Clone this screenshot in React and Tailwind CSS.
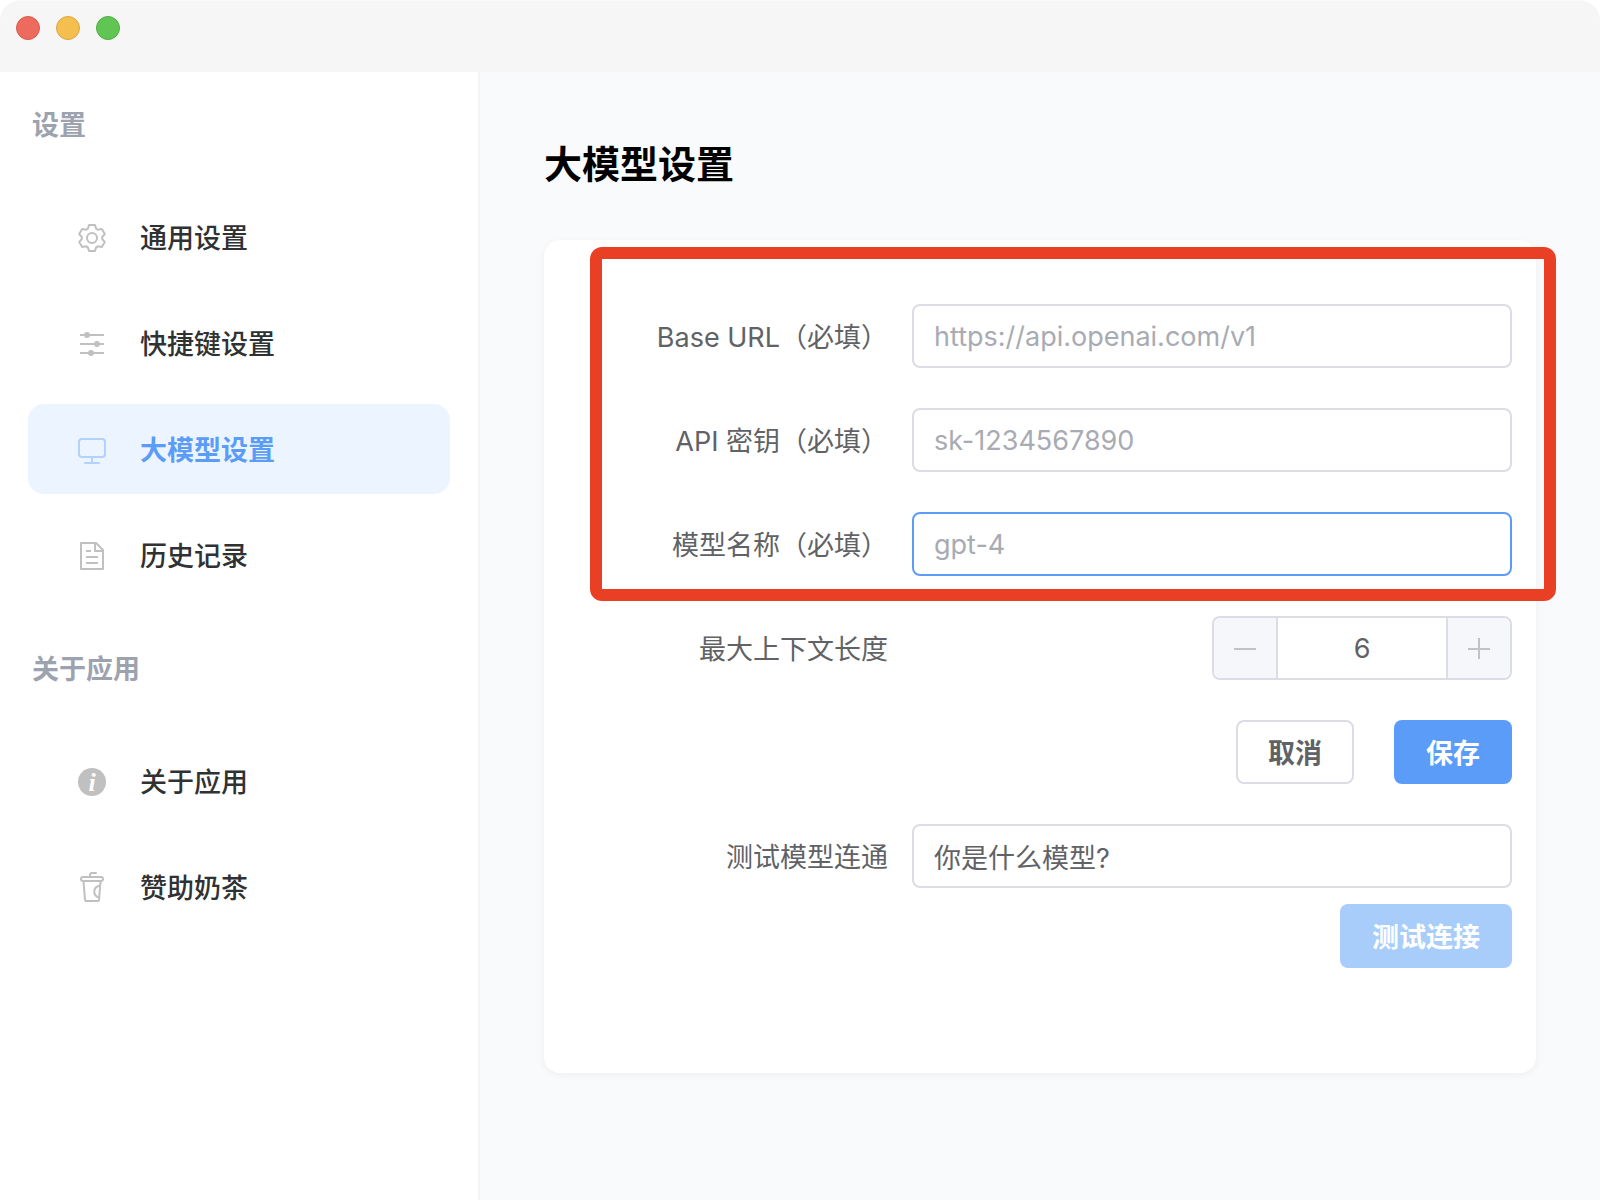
import { useState } from "react";
import clsx from "clsx";

function GearIcon(props) {
  return (
    <svg viewBox="0 0 32 32" fill="none" stroke="currentColor" strokeWidth="2" strokeLinejoin="round" {...props}>
      <path
        transform="translate(16 17)"
        d="M-3-13H3L4-9.6Q5.1-8.6 6.3-8.3L9.8-9.1L12.8-3.9L10.3-1.3Q10 0 10.3 1.3L12.8 3.9L9.8 9.1L6.3 8.3Q5.1 8.6 4 9.6L3 13H-3L-4 9.6Q-5.1 8.6-6.3 8.3L-9.8 9.1L-12.8 3.9L-10.3 1.3Q-10 0-10.3-1.3L-12.8-3.9L-9.8-9.1L-6.3-8.3Q-5.1-8.6-4-9.6Z"
      />
      <circle cx="16" cy="17" r="5" />
    </svg>
  );
}

function SlidersIcon(props) {
  return (
    <svg viewBox="0 0 32 32" fill="currentColor" {...props}>
      <path d="M4 7h24v2H4zM4 16h24v2H4zM4 25h24v2H4z" />
      <circle cx="11" cy="8" r="3" />
      <circle cx="21" cy="17" r="3" />
      <circle cx="15" cy="26" r="3" />
    </svg>
  );
}

function MonitorIcon(props) {
  return (
    <svg viewBox="0 0 32 32" fill="none" stroke="currentColor" strokeWidth="2" {...props}>
      <rect x="3" y="6" width="26" height="18" rx="3" />
      <path d="M16 25v4" />
      <path d="M9 30h14" strokeLinecap="round" />
    </svg>
  );
}

function DocumentIcon(props) {
  return (
    <svg viewBox="0 0 32 32" fill="none" stroke="currentColor" strokeWidth="2" strokeLinejoin="round" {...props}>
      <path d="M5 4h15l7 7v19H5z" />
      <path d="M19 4v8h8M10 12h5M10 18h12M10 24h12" />
    </svg>
  );
}

function InfoIcon(props) {
  return (
    <svg viewBox="0 0 32 32" fill="currentColor" {...props}>
      <circle cx="16" cy="17" r="14" />
      <text x="16" y="26" textAnchor="middle" className="fill-white font-['Liberation_Serif',serif] text-[26px] font-bold italic">
        i
      </text>
    </svg>
  );
}

function CupIcon(props) {
  return (
    <svg viewBox="0 0 32 32" fill="none" stroke="currentColor" strokeWidth="2" strokeLinecap="round" strokeLinejoin="round" {...props}>
      <path d="M14 5.500V4q0-2 2-2h4" />
      <rect x="5" y="6" width="22" height="4" rx="2" />
      <path d="M7.500 10.500L9 29q.1 1 1 1h12q.9 0 1-1L24.500 10.500" />
      <path d="M24 14.500C16.500 16 16.500 25 23.200 26.500" />
    </svg>
  );
}

const MENU = [
  {
    title: "设置",
    links: [
      { id: "general", label: "通用设置", icon: GearIcon },
      { id: "shortcuts", label: "快捷键设置", icon: SlidersIcon },
      { id: "model", label: "大模型设置", icon: MonitorIcon },
      { id: "history", label: "历史记录", icon: DocumentIcon },
    ],
  },
  {
    title: "关于应用",
    links: [
      { id: "about", label: "关于应用", icon: InfoIcon },
      { id: "sponsor", label: "赞助奶茶", icon: CupIcon },
    ],
  },
];

function TitleBar() {
  return (
    <header className="flex h-[72px] shrink-0 gap-4 rounded-t-[20px] border-t border-[#fafafa] bg-[#f6f6f6] px-4 pt-[15px]">
      <button aria-label="关闭" className="size-6 rounded-full border border-[#d95a4f] bg-[#ed6a5e]" />
      <button aria-label="最小化" className="size-6 rounded-full border border-[#dba640] bg-[#f5bf4f]" />
      <button aria-label="最大化" className="size-6 rounded-full border border-[#50ad43] bg-[#61c554]" />
    </header>
  );
}

function Sidebar({ active, onSelect }) {
  return (
    <nav className="w-[480px] shrink-0 border-r-2 border-[#f3f4f6] bg-white px-7 pt-8">
      {MENU.map((section) => (
        <section key={section.title} className="mb-12">
          <h2 className="mb-11 px-1 leading-11 font-bold text-[#9ca3af]">{section.title}</h2>
          <div className="flex flex-col gap-4">
            {section.links.map((item) => (
              <a
                key={item.id}
                href={`#${item.id}`}
                onClick={() => onSelect(item.id)}
                className={clsx(
                  "flex h-[90px] items-center gap-8 rounded-2xl pl-12",
                  active === item.id ? "bg-[#ecf5ff] font-bold text-[#5a9cf8]" : "font-medium text-[#303133]"
                )}
              >
                <item.icon
                  className={clsx("size-8", active === item.id ? "text-[#b3d1fd]" : "text-[#c0c0c0]")}
                />
                <span className="pt-1">{item.label}</span>
              </a>
            ))}
          </div>
        </section>
      ))}
    </nav>
  );
}

function FieldLabel({ htmlFor, children }) {
  return (
    <label htmlFor={htmlFor} className="flex-1 pt-1 pr-6 text-right">
      {children}
    </label>
  );
}

function TextField({ id, label, highlighted, ...props }) {
  return (
    <div className="flex items-center">
      <FieldLabel htmlFor={id}>{label}</FieldLabel>
      <input
        id={id}
        type="text"
        className={clsx(
          "h-16 w-[600px] rounded-lg border-2 bg-white px-5 outline-none placeholder:text-[#a8abb2]",
          highlighted ? "border-[#5a9cf8]" : "border-[#dcdde4]"
        )}
        {...props}
      />
    </div>
  );
}

function StepperField({ id, label, value, onChange }) {
  return (
    <div className="flex items-center">
      <FieldLabel htmlFor={id}>{label}</FieldLabel>
      <div className="flex w-[600px] justify-end">
        <div className="flex h-16 w-[300px] overflow-hidden rounded-lg border-2 border-[#dcdde4]">
          <button
            type="button"
            aria-label="减少"
            onClick={() => onChange(value - 1)}
            className="flex w-16 shrink-0 items-center justify-center border-r-2 border-[#dcdde4] bg-[#f5f7fb]"
          >
            <svg viewBox="0 0 22 22" className="size-[22px] text-[#c0c2c6]" stroke="currentColor" strokeWidth="2">
              <path d="M0 12h22" />
            </svg>
          </button>
          <input
            id={id}
            type="text"
            inputMode="numeric"
            value={value}
            onChange={(e) => onChange(Number(e.target.value) || 0)}
            className="w-full min-w-0 bg-white pt-0.5 text-center outline-none"
          />
          <button
            type="button"
            aria-label="增加"
            onClick={() => onChange(value + 1)}
            className="flex w-16 shrink-0 items-center justify-center border-l-2 border-[#dcdde4] bg-[#f5f7fb]"
          >
            <svg viewBox="0 0 22 22" className="size-[22px] text-[#c0c2c6]" stroke="currentColor" strokeWidth="2">
              <path d="M0 12h22M11 1v21" />
            </svg>
          </button>
        </div>
      </div>
    </div>
  );
}

export default function App() {
  const [active, setActive] = useState("model");
  const [contextLength, setContextLength] = useState(6);

  return (
    <div className="flex min-h-screen flex-col bg-white font-['Inter','Noto_Sans_CJK_SC',sans-serif] text-[27px] leading-10 text-[#606266]">
      <TitleBar />
      <div className="flex flex-1">
        <Sidebar active={active} onSelect={setActive} />

        <main className="min-w-0 flex-1 bg-[#f9fafc] px-16 pt-16 pb-16">
          <h1 className="mb-12 text-[38px] leading-14 font-bold text-black">大模型设置</h1>

          <form className="relative flex flex-col gap-10 rounded-2xl bg-white px-6 pt-16 pb-[105px] shadow-[0_2px_8px_rgba(0,0,0,0.05)]">
            <TextField id="base-url" label="Base URL（必填）" placeholder="https://api.openai.com/v1" />
            <TextField id="api-key" label="API 密钥（必填）" placeholder="sk-1234567890" />
            <TextField id="model-name" label="模型名称（必填）" placeholder="gpt-4" highlighted />
            <StepperField id="context-length" label="最大上下文长度" value={contextLength} onChange={setContextLength} />

            <div className="flex justify-end gap-10">
              <button type="button" className="h-16 rounded-lg border-2 border-[#dcdde4] bg-white px-[30px] pt-1 font-bold">
                取消
              </button>
              <button type="button" className="h-16 rounded-lg bg-[#5a9cf8] px-8 pt-1 font-bold text-white">
                保存
              </button>
            </div>

            <div className="flex flex-col gap-4">
              <TextField id="test-prompt" label="测试模型连通" defaultValue="你是什么模型?" />
              <button type="button" className="h-16 self-end rounded-lg bg-[#a9cdfb] px-8 pt-1 font-bold text-white">
                测试连接
              </button>
            </div>

            {/* marks the required fields */}
            <div className="pointer-events-none absolute top-[7px] -right-5 left-[46px] h-[354px] rounded-xl border-[12px] border-[#e94025]" />
          </form>
        </main>
      </div>
    </div>
  );
}
